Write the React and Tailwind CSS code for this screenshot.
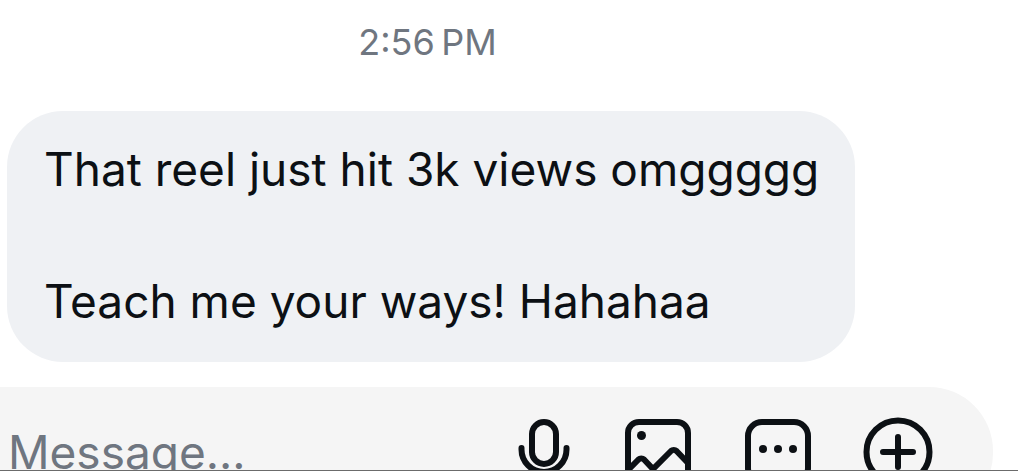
import React, { useState } from 'react';

const messages = [
  { id: 1, time: '2:56\u202fPM', text: 'That reel just hit 3k views omggggg\n\nTeach me your ways! Hahahaa' },
];

const MicIcon = () => (
  <svg className="w-[60px] h-[72px]" viewBox="0 0 60 72" fill="none" stroke="currentColor" strokeWidth="6" strokeLinecap="round" aria-hidden="true">
    <rect x="18" y="6" width="24" height="42" rx="12" />
    <path d="M7.500 32v1.500a22.500 22.500 0 0 0 45 0V32" />
    <path d="M30 57v9M20 67h20" />
  </svg>
);

const ImageIcon = () => (
  <svg className="w-[72px] h-[72px]" viewBox="0 0 72 72" fill="none" stroke="currentColor" strokeWidth="6" strokeLinejoin="round" aria-hidden="true">
    <rect x="6" y="6" width="60" height="60" rx="11" />
    <circle cx="19.500" cy="19.500" r="4.500" fill="currentColor" stroke="none" />
    <path d="M6 54l10.500-10.500a4 4 0 0 1 5.500 0L31 53l18-18a4 4 0 0 1 5.500 0L66 47M31 53l12 13" />
  </svg>
);

const MoreIcon = () => (
  <svg className="w-[72px] h-[72px]" viewBox="0 0 72 72" fill="none" stroke="currentColor" strokeWidth="6" aria-hidden="true">
    <rect x="6" y="6" width="60" height="60" rx="14" />
    <g fill="currentColor" stroke="none">
      <circle cx="21" cy="33" r="4" />
      <circle cx="36" cy="33" r="4" />
      <circle cx="51" cy="33" r="4" />
    </g>
  </svg>
);

const PlusIcon = () => (
  <svg className="w-[72px] h-[72px]" viewBox="0 0 72 72" fill="none" stroke="currentColor" strokeWidth="6" strokeLinecap="round" aria-hidden="true">
    <circle cx="36" cy="36" r="31.500" />
    <path d="M36 21v30M21 36h30" />
  </svg>
);

const actions = [
  { label: 'Record voice message', Icon: MicIcon },
  { label: 'Send a photo', Icon: ImageIcon },
  { label: 'More options', Icon: MoreIcon },
  { label: 'Add', Icon: PlusIcon },
];

export default function App() {
  const [draft, setDraft] = useState('');

  return (
    <div className="h-screen flex flex-col overflow-hidden bg-white border-b border-[#6b6b6b] font-['Inter',sans-serif] text-[#0c1014]">
      <main className="w-[84%] shrink-0">
        {messages.map((message) => (
          <div key={message.id} className="flex flex-col gap-[43px]">
            <time className="self-center pt-4 text-[36px] leading-[52px] text-[#6f7680]">{message.time}</time>
            <p className="ml-[7px] whitespace-pre-line rounded-[56px] bg-[#eff1f4] pl-[37px] pr-7 pt-[25px] pb-7 text-[46px] leading-[66px]">
              {message.text}
            </p>
          </div>
        ))}
      </main>

      <form
        onSubmit={(e) => e.preventDefault()}
        className="mt-[25px] mr-[25px] flex h-[130px] shrink-0 items-center gap-12 rounded-r-[64px] bg-[#f5f5f5] pl-2 pr-[59px]"
      >
        <input
          type="text"
          aria-label="Message"
          placeholder="Message..."
          value={draft}
          onChange={(e) => setDraft(e.target.value)}
          className="min-w-0 flex-1 bg-transparent text-[46px] leading-[66px] placeholder:text-[#6f7680] focus:outline-none"
        />
        {actions.map(({ label, Icon }) => (
          <button key={label} type="button" aria-label={label} className="shrink-0">
            <Icon />
          </button>
        ))}
      </form>
    </div>
  );
}
